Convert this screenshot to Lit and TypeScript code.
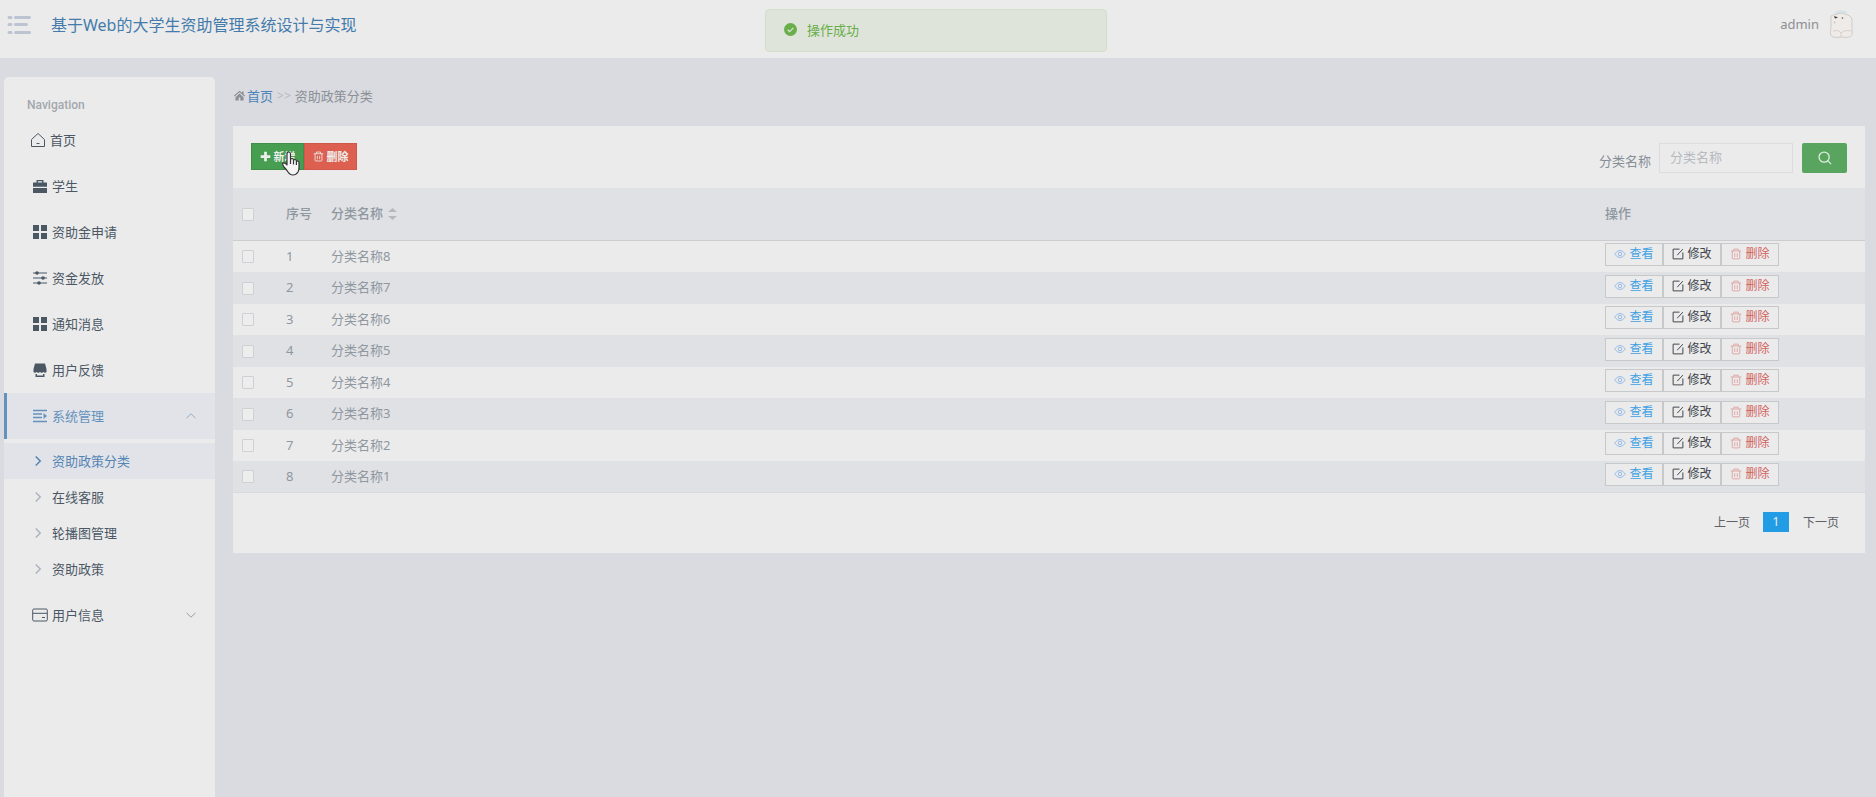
import { LitElement, html, css, svg, nothing } from "lit";
import { customElement, property, state } from "lit/decorators.js";
import { classMap } from "lit/directives/class-map.js";

const fontStack = css`"Noto Sans", "Noto Sans CJK SC", sans-serif`;

const icons: Record<string, unknown> = {
  house: svg`<path d="M1.500 7.500 8 1.500l6.500 6v7h-13zM6.500 11.500h3" fill="none" stroke="currentColor" stroke-linejoin="round"/>`,
  homeSolid: svg`<path d="M8 2 1 8.300l1 1L8 4l6 5.300 1-1-2-1.800V3h-2v1.700zM8 5.500 3 10v4h4v-3.500h2V14h4v-4z" fill="currentColor"/>`,
  briefcase: svg`<path d="M4.500 4.500V2h7v2.500h3.500v4.200H1V4.500zm1.400 0h4.200V3.300H5.900zM1 10h14v5H1z" fill="currentColor"/>`,
  grid: svg`<path d="M1 1h6v6H1zM9 1h6v6H9zM1 9h6v6H1zM9 9h6v6H9z" fill="currentColor"/>`,
  sliders: svg`<path d="M1 3h14M1 8h14M1 13h14" stroke="currentColor" stroke-width="1.200"/><circle cx="5" cy="3" r="1.800" fill="currentColor"/><circle cx="11" cy="8" r="1.800" fill="currentColor"/><circle cx="7" cy="13" r="1.800" fill="currentColor"/>`,
  shop: svg`<path d="M3 1.500h10l1.500 5.500v3l-1.500 1-1.500-1-1.800 1L8 10l-1.700 1-1.800-1L3 11l-1.500-1V7zM3.500 12H5v1.500h6V12h1.500v3h-9z" fill="currentColor"/>`,
  lines: svg`<path d="M1 2.500h14M1 6h9M1 9.500h9M1 13.500h14" stroke="currentColor" stroke-width="1.700"/><path d="M11.500 5 15 8l-3.500 3z" fill="currentColor"/>`,
  card: svg`<path d="M.7 3.200Q.7 2 1.900 2h12.200q1.200 0 1.200 1.200v9.600q0 1.200-1.200 1.200H1.900Q.7 14 .7 12.800zM1 6.300h14M10 10.500h3" fill="none" stroke="currentColor"/>`,
  up: svg`<path d="m2 11 6-6 6 6" fill="none" stroke="currentColor" stroke-width="1.300"/>`,
  down: svg`<path d="m2 5 6 6 6-6" fill="none" stroke="currentColor" stroke-width="1.300"/>`,
  right: svg`<path d="m5 2 6 6-6 6" fill="none" stroke="currentColor" stroke-width="2"/>`,
  plus: svg`<path d="M6 1h4v5h5v4h-5v5H6v-5H1V6h5z" fill="currentColor"/>`,
  trash: svg`<path d="M1 4h14M5 4V1.500h6V4M3 4v9.500q0 1 1 1h8q1 0 1-1V4M6.300 7v5M9.700 7v5" fill="none" stroke="currentColor" stroke-width="1.200"/>`,
  eye: svg`<path d="M.8 8Q8-1.500 15.200 8 8 17.500.8 8z" fill="none" stroke="currentColor" stroke-width="1.200"/><circle cx="8" cy="8" r="2.300" fill="none" stroke="currentColor" stroke-width="1.200"/>`,
  edit: svg`<path d="M10 1.500H1.500v13h13V6M7 9.500l7.500-8" fill="none" stroke="currentColor" stroke-width="1.300"/>`,
  search: svg`<circle cx="7" cy="7" r="5.800" fill="none" stroke="currentColor" stroke-width="1.500"/><path d="m11 11 4 4" stroke="currentColor" stroke-width="1.500"/>`,
  check: svg`<circle cx="8" cy="8" r="8" fill="currentColor"/><path d="m4.500 8.300 2.500 2.300 4.500-4.600" fill="none" stroke="#dfe4da" stroke-width="1.500"/>`,
};

@customElement("app-icon")
class AppIcon extends LitElement {
  static styles = css`
    :host { display: inline-flex; flex: none; width: 16px; height: 16px; }
    svg { width: 100%; height: 100%; }
  `;
  @property() name = "";
  render() {
    return html`<svg viewBox="0 0 16 16" aria-hidden="true">${icons[this.name]}</svg>`;
  }
}

@customElement("app-header")
class AppHeader extends LitElement {
  static styles = css`
    :host { display: block; font-family: ${fontStack}; }
    .bar { display: flex; align-items: flex-start; height: 58px; padding: 0 22px 0 7px; box-sizing: border-box; background: #ebebec; }
    .toggle { width: 24px; height: 20px; margin: 15px 20px 0 0; padding: 0; border: 0; background: none; color: #bcc3d1; }
    .toggle svg { display: block; width: 24px; height: 20px; }
    .title { flex: 1; margin: 12px 0 0; font-size: 16px; line-height: 26px; font-weight: 400; }
    .title a { color: #447bab; text-decoration: none; }
    .user { display: flex; align-items: center; gap: 10px; padding-top: 10px; color: #8e8e92; font-size: 13px; line-height: 26px; }
    .avatar { width: 25px; height: 28px; }
  `;
  render() {
    return html`
      <header class="bar">
        <button class="toggle" aria-label="菜单">
          <svg viewBox="0 0 24 20">
            <path d="M2 2.500h2M8.500 2.500h14M2 9.500h2M8.500 9.500h11M2 17.500h2M8.500 17.500h14" stroke="currentColor" stroke-width="3" stroke-linecap="round"/>
          </svg>
        </button>
        <h1 class="title"><a href="#">基于Web的大学生资助管理系统设计与实现</a></h1>
        <div class="user">
          <span>admin</span>
          <svg class="avatar" viewBox="0 0 25 28" aria-label="头像">
            <circle cx="12.500" cy="14" r="12.500" fill="#e8eaeb"/>
            <path d="M6 3Q12-.5 18 3" fill="none" stroke="#d6e2e6" stroke-width="2"/>
            <path d="M2 9Q1 5 4 5q2 0 4-1 4-2 8 0 2 1 5 2 2 1 2 5v9q1 7-3 7-3 1-7 0-5 1-9 0Q0 25 2 18z" fill="#eeebe8" stroke="#c6c4c2" stroke-width=".8"/>
            <path d="m5 6 4 1.500-3 1z" fill="#333"/><circle cx="13.500" cy="8" r=".9" fill="#888"/>
            <circle cx="5.500" cy="12.500" r=".9" fill="#e1bfb7"/>
            <path d="M4 21q4-1 6 0l2 2 3-2q4-1 7 0M12 23v4" fill="none" stroke="#d5c9c1" stroke-width=".8"/>
          </svg>
        </div>
      </header>
    `;
  }
}

@customElement("app-sidebar")
class AppSidebar extends LitElement {
  static styles = css`
    :host { display: block; background: #ebebec; border-radius: 5px 5px 0 0; font-family: ${fontStack}; }
    .nav { padding-top: 16px; }
    .heading { margin: 0; padding-left: 23px; font: 500 12px/24px Roboto, sans-serif; color: #a3a8ad; }
    .list { list-style: none; margin: 0; padding: 0; }
    .link { display: flex; align-items: center; height: 46px; box-sizing: border-box; padding: 0 18px 0 25px; border-left: 3px solid transparent; color: #4b5864; font-size: 13px; line-height: 20px; text-decoration: none; }
    .label { flex: 1; margin-left: 4px; }
    .link.outline { padding-left: 23px; }
    .link.open { color: #6592bd; border-color: #6592bd; background: #e1e3e8; }
    .link .arrow { width: 12px; height: 12px; color: #929aa3; }
    .link.open .arrow { color: #8faac4; }
    .sub { list-style: none; margin: 0; padding: 4px 0 5px; }
    .child { display: flex; align-items: center; gap: 8px; height: 36px; padding-left: 28px; color: #4b5864; font-size: 13px; line-height: 20px; text-decoration: none; }
    .child app-icon { width: 12px; height: 12px; color: #abb4be; }
    .child.current, .child.current app-icon { color: #5585b5; }
    .child.current { background: #e1e3e8; }
  `;
  items = [
    { icon: "house", label: "首页", outline: true },
    { icon: "briefcase", label: "学生" },
    { icon: "grid", label: "资助金申请" },
    { icon: "sliders", label: "资金发放" },
    { icon: "grid", label: "通知消息" },
    { icon: "shop", label: "用户反馈" },
    { icon: "lines", label: "系统管理", children: ["资助政策分类", "在线客服", "轮播图管理", "资助政策"] },
    { icon: "card", label: "用户信息", closed: true },
  ] as { icon: string; label: string; outline?: boolean; children?: string[]; closed?: boolean }[];
  render() {
    return html`
      <nav class="nav">
        <h2 class="heading">Navigation</h2>
        <ul class="list">
          ${this.items.map((item) => html`
            <li>
              <a href="#" class=${classMap({ link: true, outline: !!item.outline, open: !!item.children })}>
                <app-icon name=${item.icon}></app-icon>
                <span class="label">${item.label}</span>
                ${item.children || item.closed ? html`<app-icon class="arrow" name=${item.children ? "up" : "down"}></app-icon>` : nothing}
              </a>
              ${item.children
                ? html`<ul class="sub">${item.children.map((c, i) => html`
                    <li><a href="#" class=${classMap({ child: true, current: i === 0 })}><app-icon name="right"></app-icon>${c}</a></li>`)}</ul>`
                : nothing}
            </li>`)}
        </ul>
      </nav>
    `;
  }
}

@customElement("category-table")
class CategoryTable extends LitElement {
  static styles = css`
    :host { display: block; background: #ebebec; font-family: ${fontStack}; color: #8f979f; font-size: 13px; }
    button { font-family: inherit; }
    .tools { display: flex; justify-content: space-between; align-items: flex-start; height: 62px; box-sizing: border-box; padding: 17px 18px 0; }
    .actions { display: flex; position: relative; }
    .act { display: flex; align-items: center; justify-content: center; gap: 3px; width: 53px; height: 27px; padding: 0; border: 1px solid #418d4a; background: #479e50; color: #ecefec; font-size: 11px; font-weight: 700; line-height: 16px; }
    .act.del { border-color: #d0574a; background: #dd5f50; }
    .act app-icon { width: 11px; height: 11px; }
    .hand { position: absolute; left: 30px; top: 8px; width: 19px; height: 25px; }
    .search { display: flex; align-items: center; height: 30px; }
    .search label { padding: 6px 8px 0 0; line-height: 20px; color: #868e96; }
    .search input { width: 134px; height: 30px; box-sizing: border-box; margin-right: 9px; padding: 0 10px 2px; border: 1px solid #dcdddf; background: #ebebec; font: 13px ${fontStack}; color: #777; }
    .search input::placeholder { color: #b7bac0; opacity: 1; }
    .find { display: flex; align-items: center; justify-content: center; width: 45px; height: 30px; padding: 0; border: 0; border-radius: 2px; background: #59a560; color: #dcebdd; }
    .find app-icon { width: 14px; height: 14px; }
    .table { width: 100%; table-layout: fixed; border-collapse: separate; border-spacing: 0; }
    .table th { height: 53px; box-sizing: border-box; padding: 0 0 2px; border-bottom: 1px solid #cbccd0; background: #e0e1e5; text-align: left; font-weight: 500; line-height: 20px; }
    .table td { height: 31px; box-sizing: border-box; padding: 0 0 2px; line-height: 20px; }
    .table tr:nth-child(even) td { height: 32px; background: #e0e1e5; }
    .table tr:last-child td { border-bottom: 1px solid #d8dade; }
    .pick { width: 53px; }
    .no { width: 45px; }
    .ops { width: 260px; }
    .box { display: block; appearance: none; width: 12px; height: 13px; box-sizing: border-box; margin: 2px 0 0 9px; border: 1px solid #ced0d4; border-radius: 1px; background: #ededee; }
    .sort { width: 9px; height: 12px; margin-left: 5px; vertical-align: -2px; }
    .group { display: flex; height: 25px; }
    .op { display: flex; align-items: center; justify-content: center; gap: 3px; width: 58px; height: 23px; padding: 0 0 1px; border: 1px solid #c7c8ca; background: #ebebec; color: #41444a; font-size: 12px; line-height: 18px; }
    .op app-icon { width: 12px; height: 12px; }
    .op.view { color: #40a1e3; }
    .op.view app-icon { color: #8bb5e5; }
    .op.remove { color: #d2625a; }
    .op.remove app-icon { color: #dda29e; }
    .pages { display: flex; justify-content: flex-end; align-items: flex-start; height: 60px; box-sizing: border-box; padding: 18px 26px 0; font-size: 12px; line-height: 24px; }
    .pages button { padding: 0; border: 0; background: none; color: #5d6064; font-size: 12px; line-height: 24px; }
    .pages .page { width: 26px; height: 20px; margin: 1px 14px 0 13px; background: #239ce6; color: #e8f0f5; line-height: 20px; }
  `;
  @state() rows = [8, 7, 6, 5, 4, 3, 2, 1];
  render() {
    return html`
      <div class="tools">
        <div class="actions">
          <button class="act"><app-icon name="plus"></app-icon>新增</button>
          <button class="act del"><app-icon name="trash"></app-icon>删除</button>
          <svg class="hand" viewBox="0 0 19 25" aria-hidden="true">
            <path d="M6 14V3q0-2 1.700-2T9.500 3v6q0-1.500 1.500-1.500T12.500 9v1q0-1.500 1.400-1.500t1.500 1.500v1.200q0-1.200 1.200-1.200T18 11.500V17q0 2-1 4-2 3-5 3t-5-3q-2-3-4-5-2-3-1-4 1.600-.8 4 1.500zM9.500 9v4M12.500 10v3.500M15.400 11v3" fill="#f4f4f5" stroke="#34343a" stroke-width="1.200" stroke-linejoin="round"/>
          </svg>
        </div>
        <form class="search" @submit=${(e: Event) => e.preventDefault()}>
          <label for="name">分类名称</label>
          <input id="name" type="text" placeholder="分类名称" />
          <button class="find" aria-label="搜索"><app-icon name="search"></app-icon></button>
        </form>
      </div>
      <table class="table">
        <thead>
          <tr>
            <th class="pick"><input class="box" type="checkbox" aria-label="全选" /></th>
            <th class="no">序号</th>
            <th>分类名称<svg class="sort" viewBox="0 0 9 12" aria-hidden="true"><path d="M4.500 0 9 4H0zM4.500 12 0 8h9z" fill="#b5b9be"/></svg></th>
            <th class="ops">操作</th>
          </tr>
        </thead>
        <tbody>
          ${this.rows.map((n, i) => html`
            <tr>
              <td><input class="box" type="checkbox" aria-label="选择第${i + 1}行" /></td>
              <td>${i + 1}</td>
              <td>分类名称${n}</td>
              <td>
                <div class="group">
                  <button class="op view"><app-icon name="eye"></app-icon>查看</button>
                  <button class="op"><app-icon name="edit"></app-icon>修改</button>
                  <button class="op remove"><app-icon name="trash"></app-icon>删除</button>
                </div>
              </td>
            </tr>`)}
        </tbody>
      </table>
      <div class="pages">
        <button>上一页</button>
        <button class="page" aria-current="page">1</button>
        <button>下一页</button>
      </div>
    `;
  }
}

@customElement("app-root")
class AppRoot extends LitElement {
  static styles = css`
    :host { display: flex; flex-direction: column; min-height: 100vh; background: #d9dbe0; font-family: ${fontStack}; }
    .body { display: flex; flex: 1; gap: 18px; padding: 19px 11px 0 4px; }
    .side { flex: none; width: 211px; }
    .main { flex: 1; min-width: 0; }
    .crumbs { display: flex; align-items: center; height: 37px; margin-bottom: 12px; color: #8b9096; font-size: 13px; line-height: 20px; }
    .crumbs app-icon { width: 13px; height: 13px; margin-right: 1px; }
    .crumbs a { color: #4b84ba; text-decoration: none; }
    .sep { margin: 0 4px; color: #b4b8bf; font-size: 12px; }
    .toast { position: absolute; top: 9px; left: calc(50% - 173px); display: flex; align-items: center; gap: 10px; width: 342px; height: 43px; box-sizing: border-box; padding: 0 18px 2px; border: 1px solid #d2dfca; border-radius: 4px; background: #dfe4da; color: #68ae49; font-size: 13px; line-height: 20px; }
    .toast app-icon { width: 13px; height: 13px; }
  `;
  render() {
    return html`
      <app-header></app-header>
      <div class="body">
        <app-sidebar class="side"></app-sidebar>
        <main class="main">
          <nav class="crumbs" aria-label="位置">
            <app-icon name="homeSolid"></app-icon><a href="#">首页</a><span class="sep">&gt;&gt;</span><span>资助政策分类</span>
          </nav>
          <category-table></category-table>
        </main>
      </div>
      <div class="toast" role="alert"><app-icon name="check"></app-icon>操作成功</div>
    `;
  }
}
